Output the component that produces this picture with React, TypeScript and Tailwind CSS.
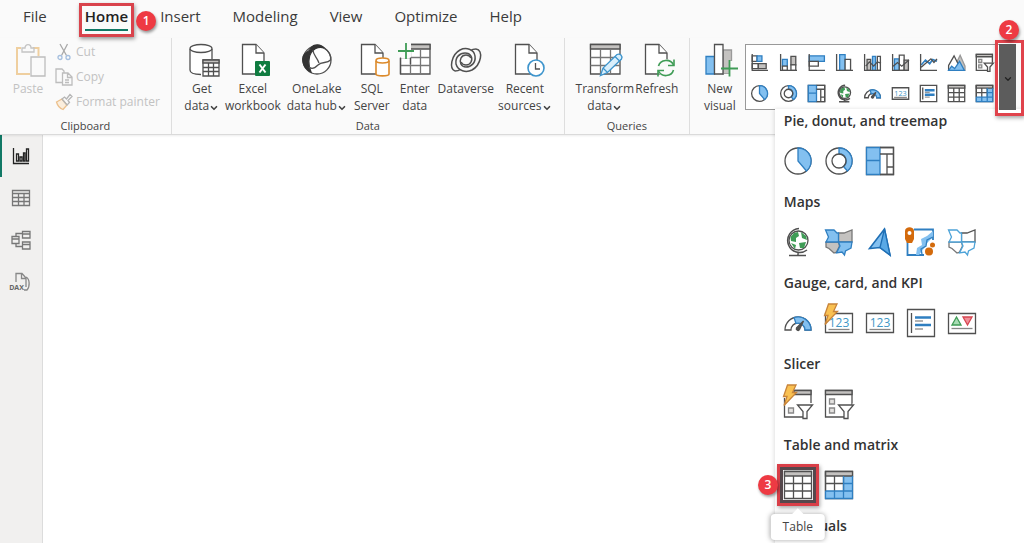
import type { ReactNode } from 'react';
import clsx from 'clsx';
import { ChevronDown } from 'lucide-react';

const INK = '#505050';
const BLUE = '#83c0f0';
const DEEP = '#2f7fc1';
const GRAY = '#c4c2c0';
const GREEN = '#3f9c56';

type IconProps = { className?: string };

function Svg({ box = 28, className, children }: { box?: number; className?: string; children: ReactNode }) {
  return (
    <svg
      viewBox={`0 0 ${box} ${box}`}
      fill="none"
      stroke={INK}
      strokeWidth="1.3"
      aria-hidden="true"
      className={clsx('overflow-visible shrink-0 [&_*]:[vector-effect:non-scaling-stroke]', className)}
    >
      {children}
    </svg>
  );
}

/* ---------- ribbon icons ---------- */

function PageShape({ x }: { x: number }) {
  return (
    <g transform={`translate(${x} 0)`}>
      <path d="M0.5 0.5H14L22 9V30H0.5Z" fill="#fff" />
      <path d="M14 0.5V9H22" fill="#fff" />
    </g>
  );
}

function GridShape() {
  return (
    <>
      <path d="M1.5 0.5H31V30H1.5Z" fill="#fff" />
      <path d="M1.5 0.5H31V5H1.5Z" fill={GRAY} />
      <path d="M1.5 13.5H31M1.5 21.5H31M11.5 5V30M21.5 5V30" stroke="#777" />
    </>
  );
}

function PasteIcon() {
  return (
    <Svg box={32} className="h-8 w-8">
      <path d="M9 4H5V30H18M21 4H26.5V12" stroke="#efcf9f" strokeWidth="2" />
      <path d="M10 8V4H13C13 -0.5 19 -0.5 19 4H22V8Z" stroke="#c4c4c4" fill="#fafafa" />
      <path d="M19 13H33V32H19Z" stroke="#bdbdbd" fill="#fafafa" />
    </Svg>
  );
}

function CutIcon() {
  return (
    <Svg box={16} className="h-4 w-4">
      <path d="M4 0L10.5 11.5M11.5 0L5.5 11.5" stroke="#a8a8a8" />
      <circle cx="4" cy="13.5" r="2" stroke="#a5bfdf" />
      <circle cx="12" cy="13.5" r="2" stroke="#a5bfdf" />
    </Svg>
  );
}

function CopyIcon() {
  return (
    <Svg box={16} className="h-4 w-4">
      <path d="M6 13.5H0V0H6L8 2V4" stroke="#bdbdbd" />
      <path d="M6.5 4H12L16 8V16H6.5ZM11.5 4V8.5H16M9 11H13M9 13.5H13" stroke="#bdbdbd" />
    </Svg>
  );
}

function PainterIcon() {
  return (
    <Svg box={16} className="h-4 w-4">
      <path d="M0.5 8L6 5L11 11L7 15.5C4 14.5 1.5 11.5 0.5 8Z" stroke="#ecc08c" fill="#fbeedd" />
      <path d="M6 5L8.5 3L10.5 5L14 0.5L16 2.5L12 6.5L13.5 8.5L11 11Z" stroke="#b5b5b5" />
    </Svg>
  );
}

function GetDataIcon() {
  return (
    <Svg box={32} className="h-8 w-8">
      <path d="M4 5V26C4 29 9 30.5 16 30.5H26V5" fill="#fff" stroke="none" />
      <ellipse cx="15" cy="4.5" rx="11" ry="4" fill="#fff" />
      <path d="M4 5V26C4 29 9 30.5 15 30.5M26 5V15" />
      <path d="M17 16H33V32H17Z" fill="#fff" />
      <path d="M17 16H33V19H17Z" fill={GRAY} />
      <path d="M17 23.5H33M17 27.5H33M22.5 19V32M27.5 19V32" />
    </Svg>
  );
}

function ExcelIcon() {
  return (
    <Svg box={32} className="h-8 w-8">
      <PageShape x={5} />
      <rect x="18" y="17" width="15" height="15" rx="1" fill="#107c41" stroke="none" />
      <path d="M22.5 20.5L28.5 28.5M28.5 20.5L22.5 28.5" stroke="#fff" strokeWidth="2" />
    </Svg>
  );
}

function OneLakeIcon() {
  return (
    <Svg box={32} className="h-8 w-8">
      <circle cx="16" cy="16" r="14" fill="#fff" />
      <path d="M10 4C13 -0.5 20 0 23 4C18 2.5 14 4 10.500 8C7 13 7 21 10 28C1 24 -1 12 6 8C7.500 7.500 9 6 10 4Z" fill="#333" stroke="#333" />
      <path d="M23 4C28 7 30.5 12 29.5 16C26 20 21 17 17 21C14 24 11 26 8 23M12 6C12 11 16 13 18 19" />
    </Svg>
  );
}

function SqlIcon() {
  return (
    <Svg box={32} className="h-8 w-8">
      <PageShape x={5} />
      <path d="M20 17V30C20 32.5 33 32.5 33 30V17" fill="#fff" stroke="#dc8a2b" strokeWidth="1.6" />
      <ellipse cx="26.5" cy="16.5" rx="6.5" ry="2.5" fill="#fff" stroke="#dc8a2b" strokeWidth="1.6" />
    </Svg>
  );
}

function EnterDataIcon() {
  return (
    <Svg box={32} className="h-8 w-8">
      <GridShape />
      <path d="M-1 -3H12V14H-1Z" fill="#fafafa" stroke="none" />
      <path d="M1.5 13.5V30M11.5 13.5V20" />
      <path d="M7 -1V15M-1 7H15" stroke={GREEN} strokeWidth="1.8" />
    </Svg>
  );
}

function DataverseIcon() {
  return (
    <Svg box={32} className="h-8 w-8">
      <path d="M5 27C-1 25 1 11 10 6C16 3 24 5 25 12C26 19 21 23 16 23C11 23 9 18 11 14C13 10 19 10 21 14" strokeWidth="1.5" />
      <path d="M26 5C34 6 31 21 22 26C16 29 8 27 6 20C5 13 10 9 15 9C21 9 23 14 21 18C19 22 13 22 11 18" strokeWidth="1.5" />
      <path d="M26 5C24 5 22 5.5 21 6.5M5 27C8 27 9 26.5 10.5 25.5" strokeWidth="1.5" />
    </Svg>
  );
}

function RecentIcon() {
  return (
    <Svg box={32} className="h-8 w-8">
      <PageShape x={6} />
      <circle cx="27" cy="24" r="8" fill="#fff" stroke="#3d94cc" strokeWidth="1.6" />
      <path d="M26.5 19V25H31" />
    </Svg>
  );
}

function TransformIcon() {
  return (
    <Svg box={32} className="h-8 w-8">
      <GridShape />
      <path d="M11.5 31.5L14 24L28 10.5C31 9 34 12 32.5 15L18.5 28.5Z" fill="#d9effc" stroke="#3d94cc" />
      <path d="M14 24L18.5 28.5M26 12.5L30.5 17" stroke="#3d94cc" />
    </Svg>
  );
}

function RefreshIcon() {
  return (
    <Svg box={32} className="h-8 w-8">
      <PageShape x={4} />
      <circle cx="25" cy="24" r="9" fill="#fafafa" stroke="none" />
      <path d="M17.5 22C19.5 15 29.5 14.5 32.5 21M32.5 26C30.5 33 20.5 33.5 17.5 27" stroke={GREEN} strokeWidth="1.6" />
      <path d="M33 15.5V21.5H27M17 32.5V26.5H23" stroke={GREEN} strokeWidth="1.6" />
    </Svg>
  );
}

function NewVisualIcon() {
  return (
    <Svg box={32} className="h-8 w-8">
      <path d="M2 12.5H10.5V30H2Z" fill={BLUE} stroke={DEEP} />
      <path d="M19 6H27.5V30H19Z" fill={GRAY} stroke="#999" />
      <path d="M10.5 0.5H19V30H10.5Z" fill="#fff" />
      <path d="M26 17H34V34H20V30H26Z" fill="#fafafa" stroke="none" />
      <path d="M25.5 16V32.5M17 24.5H34" stroke={GREEN} strokeWidth="1.8" />
    </Svg>
  );
}

/* ---------- visual icons ---------- */

function StackedBar({ className }: IconProps) {
  return (
    <Svg className={className}>
      <path d="M2 3H10V12H2Z" fill="#fff" />
      <path d="M10 3H18V12H10Z" fill={BLUE} stroke={DEEP} />
      <path d="M2 16H12V24H2Z" fill="#fff" />
      <path d="M12 16H25V24H12Z" fill={GRAY} />
      <path d="M2 0V27H28" />
    </Svg>
  );
}

function StackedColumn({ className }: IconProps) {
  return (
    <Svg className={className}>
      <path d="M4 9H12V20H4Z" fill={BLUE} stroke={DEEP} />
      <path d="M4 20H12V27H4Z" fill="#fff" />
      <path d="M18 4H26V18H18Z" fill={GRAY} />
      <path d="M18 18H26V27H18Z" fill="#fff" />
      <path d="M1 0V27H28" />
    </Svg>
  );
}

function ClusteredBar({ className }: IconProps) {
  return (
    <Svg className={className}>
      <path d="M2 3H27V12H2Z" fill={BLUE} stroke={DEEP} />
      <path d="M2 12H17V20H2Z" fill="#fff" />
      <path d="M2 0V27H28" />
    </Svg>
  );
}

function ClusteredColumn({ className }: IconProps) {
  return (
    <Svg className={className}>
      <path d="M6 1H15V27H6Z" fill={BLUE} stroke={DEEP} />
      <path d="M15 9H24V27H15Z" fill="#fff" />
      <path d="M1 0V27H28" />
    </Svg>
  );
}

function LineStacked({ className }: IconProps) {
  return (
    <Svg className={className}>
      <path d="M5 9H11V27H5Z" fill={GRAY} />
      <path d="M14 4H19V27H14Z" fill={BLUE} stroke={DEEP} />
      <path d="M22 4H27V27H22Z" fill="#fff" />
      <path d="M1 0V27H28M3 20L9 13L16 20L22 13L28 15" />
    </Svg>
  );
}

function LineClustered({ className }: IconProps) {
  return (
    <Svg className={className}>
      <path d="M4 8H12V27H4Z" fill={BLUE} stroke={DEEP} />
      <path d="M12 2H20V27H12Z" fill="#fff" />
      <path d="M20 10H27V27H20Z" fill={GRAY} />
      <path d="M1 0V27H28M2 20L9 14L16 20L28 10" />
    </Svg>
  );
}

function LineChart({ className }: IconProps) {
  return (
    <Svg className={className}>
      <path d="M2 18L9 10L16 16L21 9L28 12" stroke={DEEP} strokeWidth="1.6" />
      <path d="M2 22L10 15L18 8L23 14L28 8M1 0V27H28" />
    </Svg>
  );
}

function AreaChart({ className }: IconProps) {
  return (
    <Svg className={className}>
      <path d="M8 27L20 2L28 20V27Z" fill={GRAY} stroke="#999" />
      <path d="M1 27V19L10 3L22 27Z" fill="#fff" />
      <path d="M1 27L6 20L11 24L19 12L27 27Z" fill={BLUE} stroke={DEEP} />
    </Svg>
  );
}

function Slicer({ className }: IconProps) {
  return (
    <Svg className={className}>
      <path d="M0.5 0.5H27V27H0.5Z" fill="#fff" />
      <path d="M0.5 0.5H27V4.5H0.5Z" fill={GRAY} />
      <path d="M4.5 9H9.5V14H4.5ZM4.5 18H9.5V23H4.5Z" fill="#e4e2e0" stroke="#888" />
      <path d="M19 28.5H30V13H28Z" fill="#fff" stroke="none" />
      <path d="M13.5 15H28.5L23 21.5V28.5H19V21.5Z" fill="#fff" />
    </Svg>
  );
}

function Bolt() {
  return <path d="M3.5 -5H12L8.5 2.5H12.5L0 15.5L3 6.5H-0.5Z" fill="#f9c152" stroke="#c8843a" />;
}

function NewSlicer({ className }: IconProps) {
  return (
    <Svg className={className}>
      <path d="M0.5 8V27H19M10 0.5H27V13" />
      <path d="M10 0.5H27V4.5H10Z" fill={GRAY} />
      <path d="M4.5 18H9.5V23H4.5Z" fill="#e4e2e0" stroke="#888" />
      <path d="M13.5 15H28.5L23 21.5V28.5H19V21.5Z" fill="#fff" />
      <Bolt />
    </Svg>
  );
}

function Pie({ className }: IconProps) {
  return (
    <Svg className={className}>
      <circle cx="14" cy="14" r="13" fill="#fff" />
      <path d="M14 1A13 13 0 0 1 22.5 24L14 14Z" fill={BLUE} stroke={DEEP} />
    </Svg>
  );
}

function Donut({ className }: IconProps) {
  return (
    <Svg className={className}>
      <circle cx="14" cy="14" r="13" fill="#fff" />
      <path d="M14 1A13 13 0 0 1 22.5 24L18.5 19.5A7 7 0 0 0 14 7Z" fill={BLUE} stroke={DEEP} />
      <circle cx="14" cy="14" r="7" />
    </Svg>
  );
}

function Treemap({ className }: IconProps) {
  return (
    <Svg className={className}>
      <path d="M0.5 0.5H27.5V27.5H0.5Z" fill="#fff" />
      <path d="M0.5 0.5H14V27.5H0.5ZM0.5 13.5H14" fill={BLUE} stroke={DEEP} />
      <path d="M14 0.5H27.5V27.5H14M14 7H27.5M21 7V27.5M21 20H27.5" />
    </Svg>
  );
}

function Globe({ className }: IconProps) {
  return (
    <Svg className={className}>
      <path d="M15 0.5A12 12 0 1 0 23 22M14 24.5V27M5 27.5H22" strokeWidth="1.5" />
      <circle cx="14.5" cy="12.5" r="9.5" fill="#fff" />
      <path d="M6.500 9L10 5L14 4L15 8L12 10L12 14L7 13ZM17 4L22 8L23 12L18 10ZM15 15L22 14L20 20L16 20ZM7 15L12 17L11 21Z" fill={GREEN} stroke="none" />
    </Svg>
  );
}

const mapPieces = [
  'M0.5 2L9 2L12 5L13.5 5V14H1L3.5 9Z',
  'M13.5 5H19L27 2V14H13.5Z',
  'M1 14H13.5L14.5 18L11.5 24L9 25L4 20.5L1 19Z',
  'M13.5 14H27L26 20L20.5 23L19.5 27L17 24L11.5 25L15 18Z',
];

function FilledMap({ className }: IconProps) {
  return (
    <Svg className={className}>
      <path d={mapPieces[1]} fill={GRAY} stroke="#777" />
      <path d={mapPieces[2]} fill={GRAY} stroke="#777" />
      <path d={mapPieces[0]} fill={BLUE} stroke={DEEP} />
      <path d={mapPieces[3]} fill={BLUE} stroke={DEEP} />
    </Svg>
  );
}

function ShapeMap({ className }: IconProps) {
  return (
    <Svg className={className}>
      <path d={mapPieces[1]} fill="#fff" stroke="#555" />
      <path d={mapPieces[2]} fill="#fff" stroke="#777" />
      <path d={mapPieces[0]} fill="#fff" stroke="#4da3d8" />
      <path d={mapPieces[3]} fill="#fff" stroke="#4da3d8" />
    </Svg>
  );
}

function AzureMap({ className }: IconProps) {
  return (
    <Svg className={className}>
      <path d="M18.5 1L3.5 20.5L14 19.5L24 27Z" fill={BLUE} stroke="#1f6fb5" strokeWidth="1.6" />
      <path d="M18.5 1L14 19.5L24 27Z" fill="#5aa9e6" stroke="#1f6fb5" />
    </Svg>
  );
}

function ArcGisMap({ className }: IconProps) {
  return (
    <Svg className={className}>
      <path d="M7 1.5H26V12M0.5 14V27H17" stroke={DEEP} strokeWidth="1.8" />
      <path d="M26 3V9L20 15L18 19L12 27H9L10 20L15 17L14 11L20 8Z" fill={BLUE} stroke="none" />
      <path d="M26 9L20 12L19 18L14 21L15 26" stroke={DEEP} />
      <path d="M-2 3C-2 -2 7 -2 7 3V11L5 15H0L-2 11Z" fill="#d36a0c" stroke="none" />
      <circle cx="2.5" cy="5" r="2" fill="#fff" stroke="none" />
      <circle cx="25.5" cy="17" r="2.5" fill="#d36a0c" stroke="none" />
      <circle cx="22" cy="23.5" r="4" fill="#d36a0c" stroke="none" />
    </Svg>
  );
}

function Gauge({ className }: IconProps) {
  return (
    <Svg className={className}>
      <path d="M1 21A13 13 0 0 1 27 21H21A7 7 0 0 0 7 21Z" fill="#fff" />
      <path d="M10 8.5A13 13 0 0 1 27 21H21A7 7 0 0 0 12 14.5Z" fill={BLUE} stroke={DEEP} />
      <path d="M19.5 12L15.5 20.5A1.5 1.5 0 0 1 12.5 19Z" fill={INK} />
    </Svg>
  );
}

function Digits() {
  return (
    <text x="14" y="17.5" textAnchor="middle" fontSize="12" fill="#3f97c6" stroke="none">
      123
    </text>
  );
}

function Card({ className }: IconProps) {
  return (
    <Svg className={className}>
      <path d="M0.5 4.5H27.5V23.5H0.5Z" fill="#fff" />
      <Digits />
      <path d="M3.5 20.5H24.5" stroke="#888" />
    </Svg>
  );
}

function NewCard({ className }: IconProps) {
  return (
    <Svg className={className}>
      <path d="M0.5 4.5H27.5V23.5H0.5Z" fill="#fff" />
      <Digits />
      <path d="M3.5 20.5H24.5" stroke="#888" />
      <Bolt />
    </Svg>
  );
}

function MultiRowCard({ className }: IconProps) {
  return (
    <Svg className={className}>
      <path d="M0.5 0.5H27.5V27.5H0.5Z" fill="#fff" />
      <path d="M4.5 4V24" />
      <path d="M8 8.5H24M8 16H24" stroke={DEEP} strokeWidth="2.5" />
      <path d="M8 12H16M8 20H16" stroke="#999" />
    </Svg>
  );
}

function Kpi({ className }: IconProps) {
  return (
    <Svg className={className}>
      <path d="M0.5 4.5H27.5V24.5H0.5Z" fill="#fff" />
      <path d="M4 16L8.5 8L13 16Z" fill="#a9dcb5" stroke={GREEN} />
      <path d="M15 8H24L19.5 16Z" fill="#f08f98" stroke="#d64550" />
      <path d="M3.5 19.5H24.5" stroke="#888" />
    </Svg>
  );
}

function TableVisual({ className }: IconProps) {
  return (
    <Svg className={className}>
      <path d="M0.5 0.5H27.5V27.5H0.5Z" fill="#fff" />
      <path d="M0.5 0.5H27.5V5H0.5Z" fill={GRAY} />
      <path d="M0.5 12.5H27.5M0.5 20H27.5M9.5 5V27.5M18.5 5V27.5" />
    </Svg>
  );
}

function Matrix({ className }: IconProps) {
  return (
    <Svg className={className}>
      <path d="M0.5 0.5H27.5V27.5H0.5Z" fill="#fff" />
      <path d="M18.5 5H27.5V27.5H0.5V20H18.5Z" fill={BLUE} stroke="none" />
      <path d="M0.5 0.5H27.5V5H0.5Z" fill={GRAY} />
      <path d="M0.5 0.5V20M0.5 12.5H18.5M9.5 5V20M18.5 5V20" />
      <path d="M0.5 20V27.5H27.5V5M0.5 20H27.5M9.5 20V27.5M18.5 5V27.5M18.5 12.5H27.5" stroke={DEEP} />
    </Svg>
  );
}

/* ---------- rail icons ---------- */

function ReportIcon() {
  return (
    <Svg box={18} className="h-[18px] w-[18px]">
      <path d="M1.5 1V16.5H17M4.5 7H6.5V14H4.5ZM8 10H10V14H8ZM11.5 6H13V14H11.5ZM14.5 2H16.5V14H14.5Z" stroke="#222" />
    </Svg>
  );
}

function TableViewIcon() {
  return (
    <Svg box={18} className="h-[18px] w-[18px]">
      <path d="M0.5 1.5H17.5V16.5H0.5ZM0.5 4.5H17.5M0.5 8.5H17.5M0.5 12.5H17.5M6.5 4.5V16.5M12 4.5V16.5" stroke="#777" />
    </Svg>
  );
}

function ModelIcon() {
  return (
    <Svg box={18} className="h-[18px] w-[18px]">
      <path d="M0 5.5H7V12.5H0ZM0 8H7M10.5 0.5H18V7H10.5ZM10.5 3H18M10.5 11H18V18H10.5ZM10.5 13.5H18M4 5.5V2.5H10.5M4 12.5V15.5H10.5" stroke="#777" />
    </Svg>
  );
}

function DaxIcon() {
  return (
    <Svg box={18} className="h-[18px] w-[18px]">
      <path d="M4 9V0.5H10L14 5V14M9.5 0.5V5.5H14M14 4C18 6 18 14 15 17H12" stroke="#888" />
      <text x="4.5" y="17" textAnchor="middle" fontSize="7" fontWeight="700" fill="#666" stroke="none">
        DAX
      </text>
    </Svg>
  );
}

/* ---------- data ---------- */

const tabs = ['File', 'Home', 'Insert', 'Modeling', 'View', 'Optimize', 'Help'];

const dataTools = [
  { lines: ['Get', 'data'], menu: true, icon: GetDataIcon, width: 'w-10' },
  { lines: ['Excel', 'workbook'], icon: ExcelIcon, width: 'w-[62px]' },
  { lines: ['OneLake', 'data hub'], menu: true, icon: OneLakeIcon, width: 'w-[66px]' },
  { lines: ['SQL', 'Server'], icon: SqlIcon, width: 'w-11' },
  { lines: ['Enter', 'data'], icon: EnterDataIcon, width: 'w-[42px]' },
  { lines: ['Dataverse'], icon: DataverseIcon, width: 'w-[60px]' },
  { lines: ['Recent', 'sources'], menu: true, icon: RecentIcon, width: 'w-[58px]' },
];

const queryTools = [
  { lines: ['Transform', 'data'], menu: true, icon: TransformIcon, width: 'w-[60px]' },
  { lines: ['Refresh'], icon: RefreshIcon, width: 'w-11' },
];

const gallery = [
  { label: 'Stacked bar chart', icon: StackedBar },
  { label: 'Stacked column chart', icon: StackedColumn },
  { label: 'Clustered bar chart', icon: ClusteredBar },
  { label: 'Clustered column chart', icon: ClusteredColumn },
  { label: 'Line and stacked column chart', icon: LineStacked },
  { label: 'Line and clustered column chart', icon: LineClustered },
  { label: 'Line chart', icon: LineChart },
  { label: 'Area chart', icon: AreaChart },
  { label: 'Slicer', icon: Slicer },
  { label: 'Pie chart', icon: Pie },
  { label: 'Donut chart', icon: Donut },
  { label: 'Treemap', icon: Treemap },
  { label: 'Map', icon: Globe },
  { label: 'Gauge', icon: Gauge },
  { label: 'Card', icon: Card },
  { label: 'Multi-row card', icon: MultiRowCard },
  { label: 'Table', icon: TableVisual },
  { label: 'Matrix', icon: Matrix },
];

const sections = [
  {
    title: 'Pie, donut, and treemap',
    items: [
      { label: 'Pie chart', icon: Pie },
      { label: 'Donut chart', icon: Donut },
      { label: 'Treemap', icon: Treemap },
    ],
  },
  {
    title: 'Maps',
    items: [
      { label: 'Map', icon: Globe },
      { label: 'Filled map', icon: FilledMap },
      { label: 'Azure map', icon: AzureMap },
      { label: 'ArcGIS map', icon: ArcGisMap },
      { label: 'Shape map', icon: ShapeMap },
    ],
  },
  {
    title: 'Gauge, card, and KPI',
    items: [
      { label: 'Gauge', icon: Gauge },
      { label: 'Card (new)', icon: NewCard },
      { label: 'Card', icon: Card },
      { label: 'Multi-row card', icon: MultiRowCard },
      { label: 'KPI', icon: Kpi },
    ],
  },
  {
    title: 'Slicer',
    items: [
      { label: 'Slicer (new)', icon: NewSlicer },
      { label: 'Slicer', icon: Slicer },
    ],
  },
  {
    title: 'Table and matrix',
    items: [
      { label: 'Table', icon: TableVisual, selected: true },
      { label: 'Matrix', icon: Matrix },
    ],
  },
  { title: 'AI visuals', items: [] },
];

const views = [
  { label: 'Report view', icon: ReportIcon, active: true },
  { label: 'Table view', icon: TableViewIcon },
  { label: 'Model view', icon: ModelIcon },
  { label: 'DAX query view', icon: DaxIcon },
];

/* ---------- pieces ---------- */

function Badge({ children, className }: { children: ReactNode; className: string }) {
  return (
    <span
      className={clsx(
        'absolute z-20 flex h-5 w-5 items-center justify-center rounded-full bg-[#ee3a43] text-xs font-semibold text-white shadow-[1px_2px_3px_rgba(0,0,0,0.4)]',
        className
      )}
    >
      {children}
    </span>
  );
}

type Tool = { lines: string[]; menu?: boolean; icon: () => ReactNode; width: string };

function ToolButton({ lines, menu, icon: Icon, width }: Tool) {
  return (
    <button type="button" className={clsx('flex flex-col items-center gap-1 text-xs leading-[17px] text-[#444]', width)}>
      <Icon />
      <span className="flex flex-col items-center whitespace-nowrap">
        {lines.map((line, i) => (
          <span key={line} className="flex items-center">
            {line}
            {menu && i === lines.length - 1 && <ChevronDown className="mt-1 h-2.5 w-2.5" strokeWidth={4} />}
          </span>
        ))}
      </span>
    </button>
  );
}

function Group({ label, className, children }: { label: string; className?: string; children: ReactNode }) {
  return (
    <section className="flex shrink-0 flex-col justify-between border-r border-[#dedede]">
      <div className={clsx('flex pt-1.5', className)}>{children}</div>
      <h2 className="text-center text-[11px] leading-4 text-[#444]">{label}</h2>
    </section>
  );
}

function VisualsPanel() {
  return (
    <div className="absolute top-[65px] left-[30px] -right-2 h-screen bg-white px-[9px] pt-0.5 shadow-[-1px_0_4px_rgba(0,0,0,0.12)]">
      {sections.map(({ title, items }) => (
        <section key={title} className="pb-[18px]">
          <h3 className="text-sm leading-5 font-semibold text-[#333]">{title}</h3>
          <div className="mt-4 -mb-px flex gap-[13px]">
            {items.map(({ label, icon: Icon, ...rest }) =>
              'selected' in rest ? (
                <button key={label} type="button" aria-label={label} className="relative">
                  <span className="absolute -inset-[7px] border-[3px] border-[#d93f48] bg-[#55484c] shadow-[1px_2px_4px_rgba(0,0,0,0.35)]" />
                  <span className="absolute -inset-px bg-white" />
                  <Icon className="relative h-7 w-7" />
                  <Badge className="top-1 -left-[26px]">3</Badge>
                  <span className="absolute top-[43px] left-1/2 -translate-x-1/2 rounded-sm bg-white px-3 py-1 text-xs leading-[18px] text-[#444] shadow-[0_0_5px_rgba(0,0,0,0.35)]">
                    <span className="absolute -top-1 left-1/2 h-2 w-2 -translate-x-1/2 rotate-45 bg-white" />
                    {label}
                  </span>
                </button>
              ) : (
                <button key={label} type="button" aria-label={label}>
                  <Icon className="h-7 w-7" />
                </button>
              )
            )}
          </div>
        </section>
      ))}
    </div>
  );
}

function Ribbon() {
  return (
    <div className="relative z-10 flex h-[97px] border-b border-[#dadada] shadow-[0_1px_2px_rgba(0,0,0,0.08)]">
      <Group label="Clipboard" className="pr-[11px] pl-3 text-xs leading-4 text-[#c2c2c2]">
        <button type="button" disabled className="flex w-8 flex-col items-center gap-1 leading-[17px]">
          <PasteIcon />
          Paste
        </button>
        <div className="ml-3 flex flex-col gap-[9px]">
          <button type="button" disabled className="flex items-center gap-1">
            <CutIcon />
            Cut
          </button>
          <button type="button" disabled className="flex items-center gap-1">
            <CopyIcon />
            Copy
          </button>
          <button type="button" disabled className="flex items-center gap-1 whitespace-nowrap">
            <PainterIcon />
            Format painter
          </button>
        </div>
      </Group>
      <Group label="Data" className="items-start px-2.5">
        {dataTools.map((tool) => (
          <ToolButton key={tool.lines[0]} {...tool} />
        ))}
      </Group>
      <Group label="Queries" className="items-start px-2.5">
        {queryTools.map((tool) => (
          <ToolButton key={tool.lines[0]} {...tool} />
        ))}
      </Group>
      <section className="flex flex-1 items-start pt-1.5 pr-2 pl-[7px]">
        <ToolButton lines={['New', 'visual']} icon={NewVisualIcon} width="w-[46px]" />
        <div className="relative ml-0.5 flex flex-1">
          <div className="grid flex-1 grid-cols-9 border border-r-0 border-[#999] bg-white pt-0.5">
            {gallery.map(({ label, icon: Icon }) => (
              <button key={label} type="button" aria-label={label} className="flex h-[31px] items-center justify-center">
                <Icon className="h-[17px] w-[17px]" />
              </button>
            ))}
          </div>
          <VisualsPanel />
          <button
            type="button"
            aria-label="More visuals"
            className="relative flex w-[17px] items-center justify-center bg-[#5c5c5c] text-[#222]"
          >
            <span className="absolute -top-1 -right-2 -bottom-1.5 -left-1 border-[3px] border-[#e0434c] shadow-[1px_2px_4px_rgba(0,0,0,0.35)]" />
            <ChevronDown className="mt-1 h-2.5 w-2.5" strokeWidth={3} />
            <Badge className="-top-6 left-0">2</Badge>
          </button>
        </div>
      </section>
    </div>
  );
}

export default function App() {
  return (
    <div className="flex h-screen flex-col overflow-hidden bg-[#fafafa] font-['Open_Sans','Noto_Sans',sans-serif]">
      <nav className="flex h-[38px] shrink-0 items-start gap-8 pt-[5px] pl-[23px] text-[15px] leading-[22px] text-[#3b3b3b]">
        {tabs.map((tab) =>
          tab === 'Home' ? (
            <a key={tab} href="#home" className="relative ml-1.5 font-semibold text-[#222]">
              {tab}
              <span className="absolute inset-x-0 -bottom-1 h-0.5 bg-[#117865]" />
              <span className="absolute -top-0.5 -right-1.5 -bottom-2.5 -left-1.5 border-[3px] border-[#d9434c] shadow-[1px_2px_4px_rgba(0,0,0,0.4)]" />
              <Badge className="top-1.5 -right-7">1</Badge>
            </a>
          ) : (
            <a key={tab} href={`#${tab.toLowerCase()}`}>
              {tab}
            </a>
          )
        )}
      </nav>
      <Ribbon />
      <div className="flex min-h-0 flex-1">
        <aside className="flex w-[43px] shrink-0 flex-col border-r border-[#dcdcdc] bg-[#f1f0ef]">
          {views.map(({ label, icon: Icon, active }) => (
            <button
              key={label}
              type="button"
              aria-label={label}
              className={clsx(
                'flex h-[42px] items-center justify-center border-l-2 pr-0.5',
                active ? 'border-[#117865]' : 'border-transparent'
              )}
            >
              <Icon />
            </button>
          ))}
        </aside>
        <main className="flex-1 bg-white" />
      </div>
    </div>
  );
}
